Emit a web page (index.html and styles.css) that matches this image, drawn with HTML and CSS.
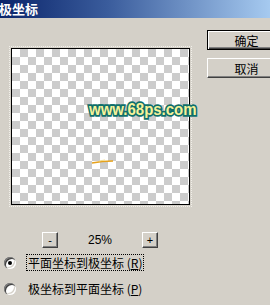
FILE: index.html
```html
<!DOCTYPE html>
<html lang="zh">
<head>
    <meta charset="UTF-8">
    <title>极坐标</title>
    <link rel="stylesheet" href="styles.css">
</head>
<body>
    <div class="titlebar">极坐标</div>

    <div class="top">
        <div class="preview">
            <div class="canvas">
                <svg class="stroke" width="24" height="6" viewBox="0 0 24 6">
                    <path d="M1 4 C6 3, 12 2, 22 2" stroke="#e6a21c" stroke-width="1.6" fill="none"/>
                    <path d="M8 2 L14 1" stroke="#f3dc8a" stroke-width="1" fill="none"/>
                </svg>
                <span class="watermark">www.68ps.com</span>
            </div>
        </div>
        <div class="actions">
            <button class="btn default">确定</button>
            <button class="btn">取消</button>
        </div>
    </div>

    <div class="zoombar">
        <button class="small">-</button>
        <span class="percent">25%</span>
        <button class="small">+</button>
    </div>

    <div class="options">
        <label class="option"><span class="radio checked"></span><span class="focus">平面坐标到极坐标 (<u>R</u>)</span></label>
        <label class="option"><span class="radio"></span><span class="text">极坐标到平面坐标 (<u>P</u>)</span></label>
    </div>
</body>
</html>
```

FILE: styles.css
```css
/* Ventana clásica */
body {
    margin: 0;
    background: #d4d0c8;
    font-family: "Noto Sans CJK SC", "Liberation Sans", sans-serif;
    font-size: 12px;
    color: #000;
    overflow: hidden;
}

.titlebar {
    height: 18px;
    line-height: 18px;
    background: linear-gradient(to right, #0a246a, #3a5c9c 40%, #a6caf0);
    color: #fff;
    font-weight: bold;
    font-size: 13px;
    margin-left: -1px;
}

.top {
    display: flex;
}

.preview {
    padding: 30px 0 0 11px;
}

.canvas {
    position: relative;
    width: 177px;
    height: 155px;
    border: 1px solid #000;
    background: repeating-conic-gradient(#cccccc 0 25%, #ffffff 0 50%) 0 0 / 16px 16px;
    outline: 1px dotted #f2f0ea;
    outline-offset: 1px;
}

.watermark {
    position: absolute;
    left: 77px;
    top: 51px;
    font-family: "Liberation Sans", sans-serif;
    font-weight: bold;
    font-size: 17px;
    color: #f6f29a;
    -webkit-text-stroke: 3.4px #0f6f6c;
    paint-order: stroke fill;
    white-space: nowrap;
    transform: scaleX(0.88);
    transform-origin: left center;
}

.stroke {
    position: absolute;
    left: 79px;
    top: 110px;
}

.actions {
    display: flex;
    flex-direction: column;
    gap: 8px;
    margin: 12px 0 0 17px;
}

.btn {
    width: 64px;
    height: 20px;
    padding: 0 0 0 14px;
    font-family: inherit;
    font-size: 12px;
    background: #d4d0c8;
    border: 1px solid;
    border-color: #fff #404040 #404040 #fff;
    border-right: none;
    box-shadow: inset 0 -1px 0 #808080;
}

.btn.default {
    border: 1px solid #000;
    border-right: none;
    box-shadow: inset 1px 1px 0 #fff, inset 0 -1px 0 #404040, inset 0 -2px 0 #808080;
}

.zoombar {
    display: flex;
    align-items: center;
    margin: 27px 0 0 42px;
    height: 16px;
}

.small {
    width: 16px;
    height: 16px;
    padding: 0;
    font-family: "Liberation Sans", sans-serif;
    font-size: 11px;
    line-height: 12px;
    background: #d4d0c8;
    border: 1px solid;
    border-color: #fff #404040 #404040 #fff;
    box-shadow: inset -1px -1px 0 #808080;
}

.percent {
    width: 84px;
    text-align: center;
    font-family: "Liberation Sans", sans-serif;
    font-size: 12px;
}

.options {
    display: flex;
    flex-direction: column;
    gap: 9px;
    margin: 6px 0 0 4px;
}

.option {
    display: flex;
    align-items: center;
    height: 17px;
}

.radio {
    position: relative;
    width: 12px;
    height: 12px;
    border-radius: 50%;
    background: #fff;
    box-shadow: inset 1px 1px 0 #808080, inset 2px 2px 0 #404040, inset -1px -1px 0 #fff, inset -2px -2px 0 #d4d0c8;
    margin-right: 10px;
}

.radio.checked::after {
    content: "";
    position: absolute;
    left: 4px;
    top: 4px;
    width: 4px;
    height: 4px;
    border-radius: 50%;
    background: #000;
}

.focus, .text {
    padding: 0 1px;
    line-height: 15px;
    border: 1px dotted transparent;
}

.focus {
    border-color: #000;
}
```
